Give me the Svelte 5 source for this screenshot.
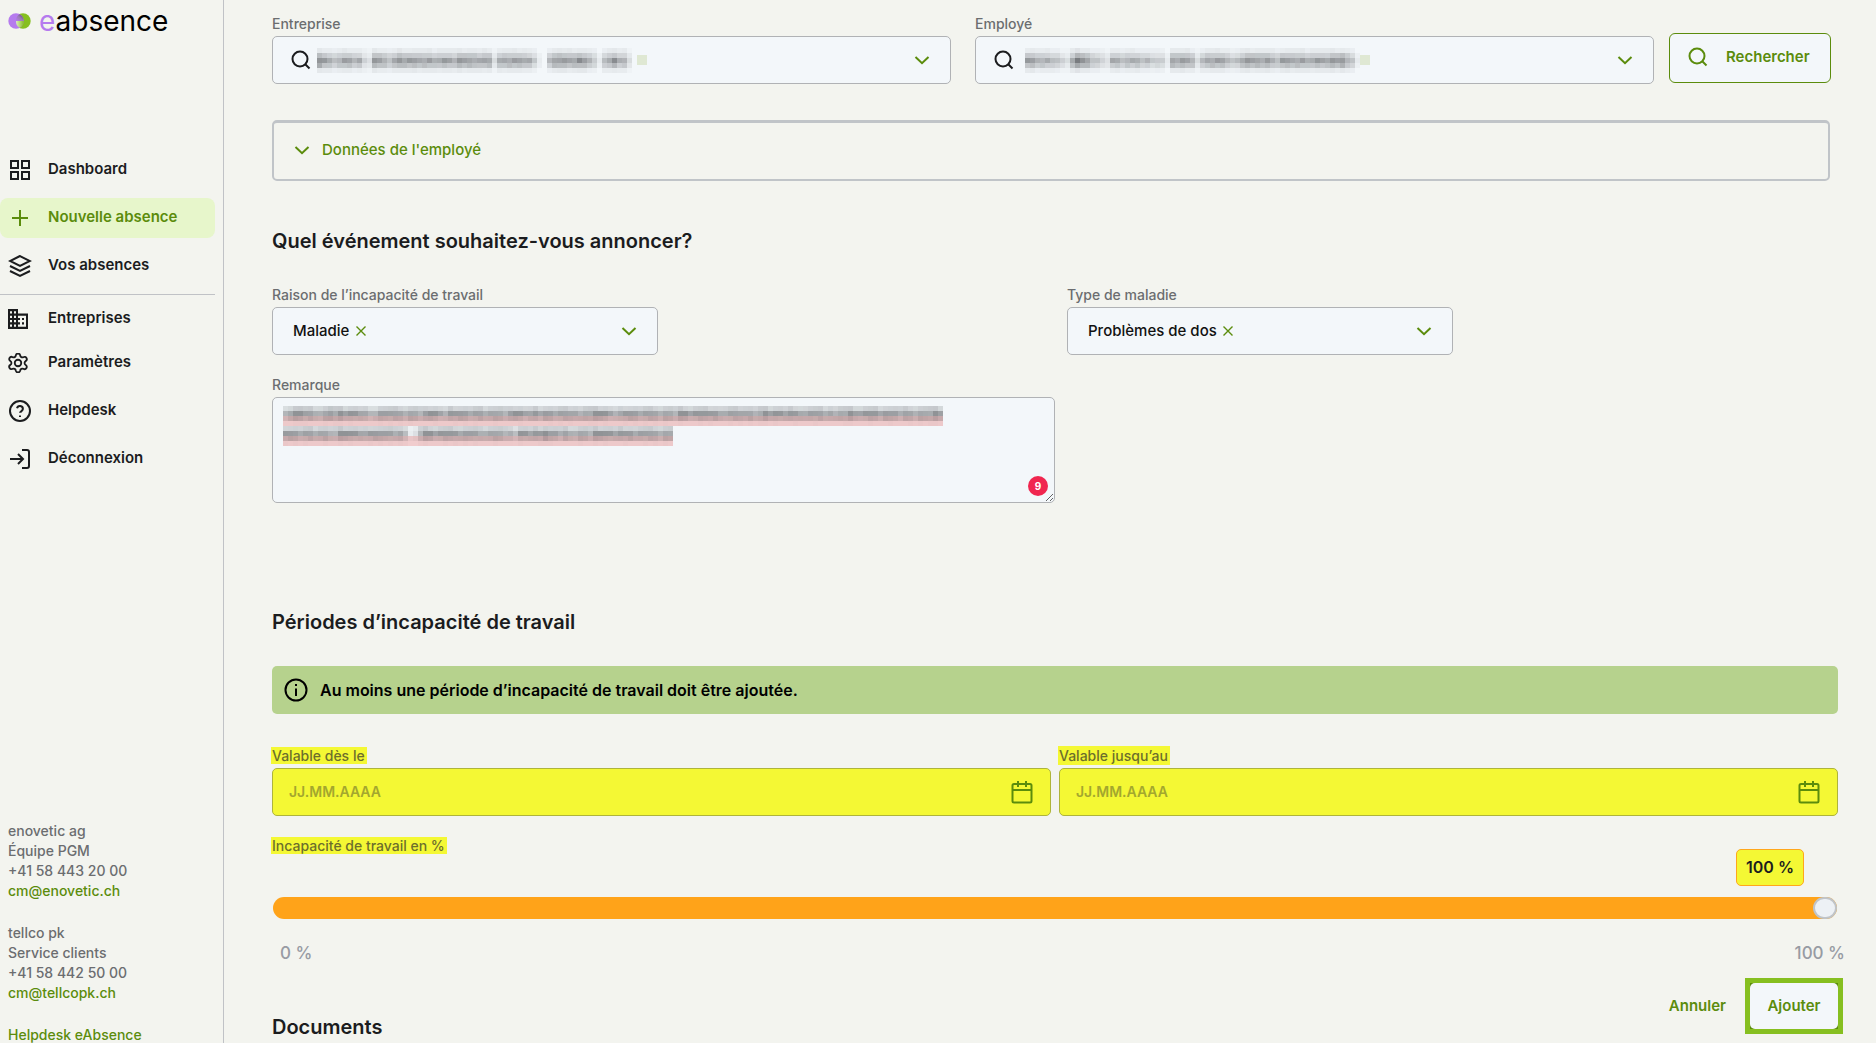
<script>
  let reason = $state('Maladie');
  let illness = $state('Problèmes de dos');
  let percent = $state(100);

  const mainNav = [
    { label: 'Dashboard', icon: 'grid' },
    { label: 'Nouvelle absence', icon: 'plus', active: true },
    { label: 'Vos absences', icon: 'layers' }
  ];
  const moreNav = [
    { label: 'Entreprises', icon: 'building' },
    { label: 'Paramètres', icon: 'gear' },
    { label: 'Helpdesk', icon: 'help' },
    { label: 'Déconnexion', icon: 'login' }
  ];
  const contacts = [
    { name: 'enovetic ag', team: 'Équipe PGM', phone: '+41 58 443 20 00', mail: 'cm@enovetic.ch' },
    { name: 'tellco pk', team: 'Service clients', phone: '+41 58 442 50 00', mail: 'cm@tellcopk.ch' }
  ];

  // Redacted values: one digit per 5px column gives the ink density.
  const company = '9765677663277656877777767776777767726777776410578777876415786620';
  const employee = '07766655327987543266566655443177776257777645777777657777767777778641';
  const remark1 = '568877667877677665577777677667765777767767776677667677677776777776567776777677677677777667777767767767766777676777667776777677677776';
  const remark2 = '777677677667777667777767512677677776777667776547767787767667767777677767777677';
  const plainRows = [0.14, 0.5, 0.95, 0.6, 0.14];
  const markedRows = [0.45, 1, 0.55, 0.06];

  function cells(pattern, rows) {
    const out = [];
    rows.forEach((weight, r) => {
      [...pattern].forEach((d, c) => {
        const noise = 0.85 + (((c * 37 + r * 61 + c * r * 13) % 17) / 17) * 0.3;
        const o = (Number(d) / 9) * weight * noise * 0.55;
        if (o > 0.01) out.push({ x: c * 5, y: r * 5, o: o.toFixed(2) });
      });
    });
    return out;
  }
</script>

{#snippet icon(name)}
  {#if name === 'building'}
    <svg class="nav-icon small" viewBox="2 3 20 18" preserveAspectRatio="none" aria-hidden="true">
      <path fill="currentColor" d="M12 7V3H2v18h20V7H12zM6 19H4v-2h2v2zm0-4H4v-2h2v2zm0-4H4V9h2v2zm0-4H4V5h2v2zm4 12H8v-2h2v2zm0-4H8v-2h2v2zm0-4H8V9h2v2zm0-4H8V5h2v2zm10 12h-8v-2h2v-2h-2v-2h2v-2h-2V9h8v10zm-2-8h-2v2h2v-2zm0 4h-2v2h2v-2z" />
    </svg>
  {:else if name === 'gear'}
    <svg class="nav-icon small stroke" viewBox="1 1 22 22" aria-hidden="true">
      <path d="M9.6 3.6a2.45 2.45 0 0 1 4.8 0 2.45 2.45 0 0 0 3.5 2 2.45 2.45 0 0 1 2.5 4.3 2.45 2.45 0 0 0 0 4.2 2.45 2.45 0 0 1-2.5 4.3 2.45 2.45 0 0 0-3.5 2 2.45 2.45 0 0 1-4.8 0 2.45 2.45 0 0 0-3.5-2 2.45 2.45 0 0 1-2.5-4.3 2.45 2.45 0 0 0 0-4.2 2.45 2.45 0 0 1 2.5-4.3 2.45 2.45 0 0 0 3.5-2z" />
      <circle cx="12" cy="12" r="3.6" />
    </svg>
  {:else}
    <svg class="nav-icon stroke" viewBox="0 0 24 24" aria-hidden="true">
      {#if name === 'grid'}
        <path d="M3 3h7v7H3zM14 3h7v7h-7zM3 14h7v7H3zM14 14h7v7h-7z" />
      {:else if name === 'plus'}
        <path d="M12 4v16M4 12h16" />
      {:else if name === 'layers'}
        <path d="M12 2 2 7l10 5 10-5zM2 12l10 5 10-5M2 17l10 5 10-5" />
      {:else if name === 'help'}
        <circle cx="12" cy="12" r="10" /><path d="M9 9.2a3 3 0 0 1 5.9.9c0 1.900-2.900 2.400-2.900 3.700M12 16.400v1.600" />
      {:else}
        <path d="M14 3h5a2 2 0 0 1 2 2v14a2 2 0 0 1-2 2h-5M10 17l5-5-5-5M15 12H2" />
      {/if}
    </svg>
  {/if}
{/snippet}

{#snippet chevron()}
  <svg class="chevron" viewBox="0 0 16 16" aria-hidden="true"><path d="M1.5 5 8 11.2 14.5 5" /></svg>
{/snippet}

{#snippet search()}
  <svg class="search-icon" viewBox="0 0 20 20" aria-hidden="true"><circle cx="9" cy="9" r="7.5" /><path d="m14 14 4.5 4.5" /></svg>
{/snippet}

{#snippet mosaic(pattern, rows, pink)}
  <svg class="mosaic" width={pattern.length * 5} height={rows.length * 5} shape-rendering="crispEdges" aria-hidden="true">
    {#if pink}
      <rect x="0" y="10" width={pattern.length * 5} height="10" fill="#f1cdce" />
    {/if}
    {#each cells(pattern, rows) as c}
      <rect x={c.x} y={c.y} width="5" height="5" fill="#24262a" fill-opacity={c.o} />
    {/each}
  </svg>
{/snippet}

{#snippet navItem(item)}
  <a href="#{item.icon}" class="nav-item" class:active={item.active}>
    <span class="icon-slot">{@render icon(item.icon)}</span>{item.label}
  </a>
{/snippet}

{#snippet lookup(id, label, pattern)}
  <div class="group">
    <label for={id}>{label}</label>
    <div class="field lookup">
      {@render search()}
      {@render mosaic(pattern, plainRows, false)}
      <span class="tag"></span>
      <input {id} type="text" />
      {@render chevron()}
    </div>
  </div>
{/snippet}

{#snippet dateField(id, label, tall)}
  <div class="group">
    <label for={id}><mark class:tall>{label}</mark></label>
    <div class="field date">
      <input {id} type="text" placeholder="JJ.MM.AAAA" />
      <button type="button" class="bare" aria-label="Ouvrir le calendrier">
        <svg class="calendar" viewBox="0 0 24 24" aria-hidden="true"><rect x="2.5" y="4" width="19" height="18.5" rx="1.5" /><path d="M2.5 10h19M8 1v6M16 1v6" /></svg>
      </button>
    </div>
  </div>
{/snippet}

<div class="app">
  <aside>
    <a class="logo" href="#home">
      <svg width="24" height="18" viewBox="0 0 24 18" aria-hidden="true">
        <defs>
          <linearGradient id="overlap" x1="1" y1="0" x2="0" y2="1">
            <stop offset="0" stop-color="#54347c" /><stop offset="0.5" stop-color="#9a7cb4" /><stop offset="1" stop-color="#b57bee" />
          </linearGradient>
          <linearGradient id="lower" x1="0" y1="0" x2="1" y2="0">
            <stop offset="0" stop-color="#dcefc0" /><stop offset="1" stop-color="#86bf20" />
          </linearGradient>
        </defs>
        <circle cx="15" cy="9" r="7.7" fill="#86bf20" />
        <circle cx="8" cy="9" r="7.7" fill="#b57bee" />
        <path d="M8 9A7.7 7.7 0 0 1 11.5 2.2 7.7 7.7 0 0 1 15.7 9z" fill="url(#overlap)" />
        <path d="M8 9h7.7A7.7 7.7 0 0 1 11.5 15.8 7.7 7.7 0 0 1 8 9z" fill="url(#lower)" />
      </svg>
      <span><i>e</i>absence</span>
    </a>

    <nav>
      {#each mainNav as item}{@render navItem(item)}{/each}
      <hr />
      {#each moreNav as item}{@render navItem(item)}{/each}
    </nav>

    <footer>
      {#each contacts as c}
        <address>
          <span>{c.name}</span>
          <span>{c.team}</span>
          <span>{c.phone}</span>
          <a href="mailto:{c.mail}">{c.mail}</a>
        </address>
      {/each}
      <a href="#helpdesk-eabsence">Helpdesk eAbsence</a>
    </footer>
  </aside>

  <main>
    <div class="search-row">
      {@render lookup('company', 'Entreprise', company)}
      {@render lookup('employee', 'Employé', employee)}
      <button type="button" class="search-button">{@render search()}Rechercher</button>
    </div>

    <button type="button" class="employee-data">{@render chevron()}Données de l'employé</button>

    <h2 class="event-title">Quel événement souhaitez-vous annoncer?</h2>

    <div class="columns">
      <div class="group half">
        <label for="reason">Raison de l’incapacité de travail</label>
        <div class="field choice">
          <select id="reason" bind:value={reason}><option>Maladie</option></select>
          <button type="button" class="bare" aria-label="Effacer la raison">
            <svg class="cross" viewBox="0 0 10 10" aria-hidden="true"><path d="m.5.5 9 9m0-9-9 9" /></svg>
          </button>
          {@render chevron()}
        </div>
      </div>
      <div class="group half">
        <label for="illness">Type de maladie</label>
        <div class="field choice">
          <select id="illness" bind:value={illness}><option>Problèmes de dos</option></select>
          <button type="button" class="bare" aria-label="Effacer le type">
            <svg class="cross" viewBox="0 0 10 10" aria-hidden="true"><path d="m.5.5 9 9m0-9-9 9" /></svg>
          </button>
          {@render chevron()}
        </div>
      </div>
    </div>

    <div class="group remark">
      <label for="remark">Remarque</label>
      <div class="remark-box">
        <textarea id="remark"></textarea>
        <div class="redacted">
          {@render mosaic(remark1, markedRows, true)}
          {@render mosaic(remark2, markedRows, true)}
        </div>
        <span class="badge">9</span>
      </div>
    </div>

    <h2 class="periods-title">Périodes d’incapacité de travail</h2>

    <div class="alert" role="status">
      <svg viewBox="0 0 24 24" aria-hidden="true"><circle cx="12" cy="12" r="10.5" /><path d="M12 10.5V18M12 6v2" /></svg>
      Au moins une période d’incapacité de travail doit être ajoutée.
    </div>

    <div class="dates">
      {@render dateField('from', 'Valable dès le', false)}
      {@render dateField('until', 'Valable jusqu’au', true)}
    </div>

    <div class="percent-head">
      <label for="percent"><mark>Incapacité de travail en %</mark></label>
      <output for="percent">{percent} %</output>
    </div>
    <input id="percent" class="slider" type="range" min="0" max="100" bind:value={percent} />
    <div class="scale"><span>0 %</span><span>100 %</span></div>

    <div class="bottom">
      <h2>Documents</h2>
      <div class="actions">
        <button type="button" class="cancel">Annuler</button>
        <span class="focus-frame"><button type="button" class="add">Ajouter</button></span>
      </div>
    </div>
  </main>
</div>

<style>
  :global(body) {
    background: #f3f4ef;
  }
  .app, .app * {
    box-sizing: border-box;
  }
  .app {
    display: flex;
    height: 100vh;
    overflow: hidden;
    font-family: Inter, 'Open Sans', sans-serif;
    font-size: 14px;
    font-weight: 500;
    line-height: 20px;
    color: #1b1c1e;
  }
  button, input, select, textarea {
    font: inherit;
    color: inherit;
  }
  button {
    cursor: pointer;
  }
  a {
    text-decoration: none;
    color: inherit;
  }
  .bare {
    display: flex;
    padding: 0;
    border: 0;
    background: none;
  }

  aside {
    flex: none;
    width: 224px;
    border-right: 1px solid #c0c2c6;
    display: flex;
    flex-direction: column;
  }
  .logo {
    display: flex;
    align-items: center;
    gap: 7px;
    padding-left: 8px;
    margin-top: 5px;
    height: 32px;
    font-size: 28px;
    line-height: 32px;
    font-weight: 400;
    color: #000;
  }
  .logo i {
    font-style: normal;
    color: #b57bee;
  }
  nav {
    margin-top: 113px;
    padding-right: 8px;
    display: flex;
    flex-direction: column;
    gap: 8px;
  }
  .nav-item {
    display: flex;
    align-items: center;
    height: 40px;
    padding: 0 0 2px 8px;
    border-radius: 8px;
    font-size: 15px;
    font-weight: 600;
  }
  .active {
    background: #e7f6cb;
    color: #5b8c0c;
  }
  .icon-slot {
    display: flex;
    width: 40px;
    padding-top: 2px;
  }
  .nav-icon {
    width: 24px;
    height: 24px;
  }
  .nav-icon.small {
    width: 20px;
    height: 20px;
  }
  .stroke {
    fill: none;
    stroke: currentColor;
    stroke-width: 2;
  }
  hr {
    width: 100%;
    margin: 0 0 -4px;
    border: 0;
    border-top: 1px solid #c0c2c6;
  }
  hr + .nav-item {
    margin-bottom: -4px;
  }
  footer {
    margin-top: 342px;
    padding-left: 8px;
    font-size: 14px;
    color: #6b6d70;
  }
  footer a {
    color: #5b8c0c;
  }
  address {
    display: flex;
    flex-direction: column;
    font-style: normal;
    margin-bottom: 22px;
  }

  main {
    flex: 1;
    min-width: 0;
    padding: 14px 38px 0 48px;
    display: flex;
    flex-direction: column;
  }
  h2 {
    margin: 0;
    font-size: 20px;
    line-height: 28px;
    font-weight: 600;
  }
  label {
    font-size: 14px;
    color: #6b6d70;
  }
  .group {
    display: flex;
    flex-direction: column;
    gap: 2px;
    min-width: 0;
  }
  .field {
    display: flex;
    align-items: center;
    height: 48px;
    padding: 0 20px;
    border: 1px solid #b0b2b5;
    border-radius: 5px;
    background: #f3f7fa;
  }
  .field input {
    flex: 1;
    min-width: 0;
    padding: 0;
    border: 0;
    outline: 0;
    background: none;
  }
  .chevron {
    flex: none;
    width: 16px;
    height: 16px;
    fill: none;
    stroke: #5b8c0c;
    stroke-width: 2;
  }
  .search-icon {
    flex: none;
    width: 20px;
    height: 20px;
    fill: none;
    stroke: currentColor;
    stroke-width: 2;
  }
  .mosaic {
    flex: none;
    display: block;
  }

  .search-row {
    display: grid;
    grid-template-columns: 703fr 694fr 162px;
    margin-right: 7px;
    align-items: end;
  }
  .search-row .group {
    margin-right: 24px;
  }
  .search-row .group + .group {
    margin-right: 15px;
  }
  .lookup {
    padding-left: 18px;
  }
  .lookup .mosaic {
    margin-left: 6px;
  }
  .tag {
    width: 10px;
    height: 10px;
    background: #dfe8d3;
  }
  .search-button {
    display: flex;
    align-items: center;
    height: 50px;
    margin-bottom: 1px;
    padding: 0 0 2px 18px;
    gap: 18px;
    border: 1px solid #5b8c0c;
    border-radius: 6px;
    background: #f3f7fa;
    color: #5b8c0c;
    font-size: 15px;
    font-weight: 600;
  }
  .employee-data {
    display: flex;
    align-items: center;
    gap: 12px;
    height: 61px;
    margin: 36px 8px 0 0;
    padding: 0 20px 3px;
    border: 2px solid #c0c4c8;
    border-top-width: 3px;
    border-radius: 5px;
    background: none;
    color: #5b8c0c;
    font-size: 15px;
  }
  .event-title {
    margin: 46px 0 30px;
  }
  .columns {
    display: grid;
    grid-template-columns: 1fr 1fr;
    gap: 24px;
  }
  .half {
    width: 50%;
  }
  .choice select {
    appearance: none;
    padding: 0;
    border: 0;
    background: none;
    font-size: 15px;
    color: #111;
  }
  .choice .bare {
    margin: 0 auto 0 6px;
  }
  .cross {
    width: 10px;
    height: 10px;
    fill: none;
    stroke: #5b8c0c;
    stroke-width: 1.4;
  }
  .remark {
    width: 50%;
    margin-top: 20px;
  }
  .remark-box {
    position: relative;
    display: flex;
  }
  textarea {
    width: 100%;
    height: 106px;
    padding: 8px 11px;
    border: 1px solid #b0b2b5;
    border-radius: 5px;
    background: #f3f7fa;
    resize: vertical;
  }
  .redacted {
    position: absolute;
    top: 9px;
    left: 11px;
    pointer-events: none;
  }
  .badge {
    position: absolute;
    right: 7px;
    bottom: 7px;
    width: 20px;
    height: 20px;
    border-radius: 50%;
    background: #f0264f;
    color: #fff;
    font-size: 10px;
    font-weight: 700;
    text-align: center;
  }
  .periods-title {
    margin: 105px 0 30px;
  }
  .alert {
    display: flex;
    align-items: center;
    gap: 12px;
    height: 48px;
    padding-left: 12px;
    border-radius: 5px;
    background: #b6d28d;
    font-size: 16px;
    font-weight: 600;
    color: #000;
  }
  .alert svg {
    width: 24px;
    height: 24px;
    fill: none;
    stroke: currentColor;
    stroke-width: 2;
  }
  .dates {
    display: grid;
    grid-template-columns: 1fr 1fr;
    gap: 8px;
    margin: 32px 0 20px;
  }
  mark {
    padding: 0 2px 0 1px;
    margin-left: -1px;
    background: #f4f834;
    color: #6c6e2c;
  }
  mark.tall {
    padding-top: 1px;
    padding-bottom: 1px;
  }
  .date {
    padding: 0 16px;
    border-color: #aeb43a;
    background: #f4f834;
  }
  .date input::placeholder {
    color: #a3a72e;
    font-weight: 600;
    opacity: 1;
  }
  .calendar {
    width: 24px;
    height: 24px;
    fill: none;
    stroke: #5b8c0c;
    stroke-width: 2;
  }
  .percent-head {
    display: flex;
    justify-content: space-between;
    align-items: flex-start;
    padding-right: 34px;
  }
  output {
    width: 68px;
    margin: 13px 0 11px;
    border: 1px solid #ffa71c;
    border-radius: 5px;
    background: #f4f834;
    font-size: 16px;
    font-weight: 600;
    line-height: 35px;
    text-align: center;
  }
  .slider {
    appearance: none;
    height: 22px;
    margin: 0 1px;
    border-radius: 11px;
    background: #ffa319;
  }
  .slider::-webkit-slider-thumb {
    appearance: none;
    width: 24px;
    height: 22px;
    border: 2px solid #c0c4c8;
    border-radius: 12px;
    background: #edf1f5;
  }
  .scale {
    display: flex;
    justify-content: space-between;
    margin: 22px -7px 18px 8px;
    font-size: 17px;
    line-height: 24px;
    color: #979ba3;
  }
  .bottom {
    display: flex;
    justify-content: space-between;
    align-items: flex-start;
  }
  .bottom h2 {
    margin-top: 30px;
  }
  .actions {
    display: flex;
    align-items: center;
    gap: 24px;
  }
  .actions button {
    height: 46px;
    border: 0;
    background: none;
    color: #5b8c0c;
    font-size: 15px;
    font-weight: 600;
  }
  .cancel {
    padding: 0;
  }
  .focus-frame {
    display: flex;
    background: #5b8c0c;
    outline: 5px solid #86bf20;
  }
  .actions .add {
    width: 88px;
    padding: 0;
    border-radius: 5px;
    background: #f3f7fa;
  }
</style>
